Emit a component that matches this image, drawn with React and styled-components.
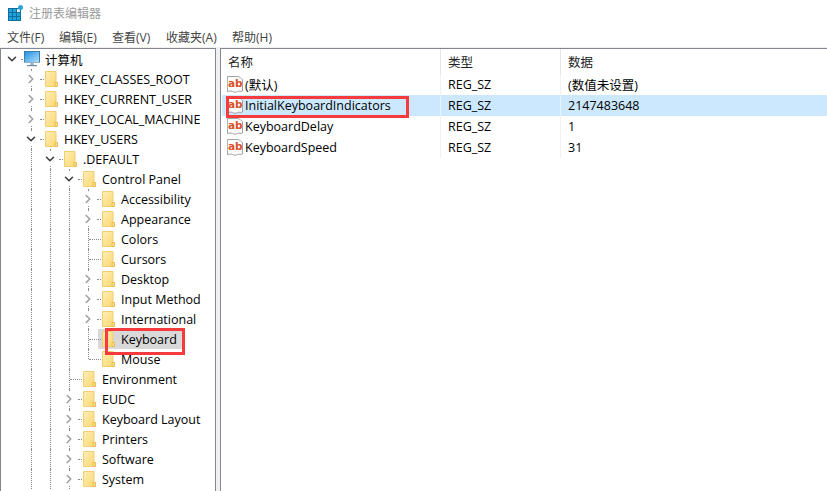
import React from "react";
import styled, { createGlobalStyle } from "styled-components";
import { ChevronDown, ChevronRight } from "lucide-react";

const Global = createGlobalStyle`
  html, body {
    margin: 0;
    height: 100%;
    overflow: hidden;
    background: #fff;
  }
`;

const Window = styled.div`
  position: relative;
  width: 827px;
  height: 491px;
  display: flex;
  flex-direction: column;
  overflow: hidden;
  background: #fff;
  color: #000;
  font-family: "Open Sans", "Noto Sans CJK SC", sans-serif;
  font-size: 12.5px;
`;

const TitleBar = styled.div`
  height: 26px;
  display: flex;
  align-items: center;
  gap: 6px;
  padding-left: 8px;
  color: #9a9a9a;
  font-size: 12px;
`;

const MenuBar = styled.div`
  height: 21px;
  display: flex;
  align-items: center;
  color: #444;
  font-size: 12px;
`;

const MenuItem = styled.span`
  width: ${props => props.width}px;
  flex: none;
  &:first-child {
    margin-left: 7px;
  }
`;

const Panes = styled.div`
  flex: 1;
  min-height: 0;
  display: flex;
  background: #f0f0f0;
  padding-top: 1px;
`;

const TreePane = styled.div`
  width: 214px;
  flex: none;
  background: #fff;
  border-top: 1px solid #828790;
  border-left: 1px solid #828790;
  border-right: 1px solid #828790;
  overflow: hidden;
`;

const ListPane = styled.div`
  flex: 1;
  margin-left: 4px;
  background: #fff;
  border-top: 1px solid #828790;
  border-left: 1px solid #828790;
  overflow: hidden;
`;

const TreeRow = styled.div`
  height: 20px;
  display: flex;
  align-items: center;
  padding-left: 2px;
  white-space: nowrap;
`;

const Guide = styled.span`
  position: relative;
  align-self: stretch;
  width: 19px;
  flex: none;
  ${props => props.$line && `
    &::before {
      content: "";
      position: absolute;
      left: 9px;
      top: 0;
      bottom: ${props.$end ? "10px" : "0"};
      border-left: 1px dotted #8a8a8a;
    }
  `}
  ${props => props.$branch && `
    &::after {
      content: "";
      position: absolute;
      left: ${props.$short ? "18px" : "10px"};
      width: ${props.$short ? "4px" : "12px"};
      top: 10px;
      border-top: 1px dotted #8a8a8a;
    }
  `}
  svg {
    position: absolute;
    left: 2px;
    top: 3px;
    background: #fff;
    z-index: 1;
  }
`;

const Selection = styled.span`
  display: flex;
  align-items: center;
  align-self: stretch;
  margin-left: ${props => props.$root ? "2px" : "4px"};
  padding-right: 5px;
  background: ${props => props.$selected ? "#d9d9d9" : "transparent"};
  box-shadow: ${props => props.$selected ? "-4px 0 0 #d9d9d9" : "none"};
`;

const NodeLabel = styled.span`
  margin-left: ${props => props.$root ? "5px" : "6px"};
`;

const ListHeader = styled.div`
  height: 25px;
  display: grid;
  grid-template-columns: 220px 120px 1fr;
  color: #222;
`;

const HeaderCell = styled.div`
  display: flex;
  align-items: center;
  padding-left: 7px;
  border-right: 1px solid #e5e5e5;
  &:last-child {
    border-right: none;
  }
`;

const ListBody = styled.div`
  position: relative;
  &::before,
  &::after {
    content: "";
    position: absolute;
    top: 0;
    bottom: 0;
    width: 1px;
    background: #eef1f5;
  }
  &::before {
    left: 219px;
  }
  &::after {
    left: 339px;
  }
`;

const ListRow = styled.div`
  height: 21px;
  display: grid;
  grid-template-columns: 219px 120px 1fr;
  align-items: center;
  margin-left: 1px;
  background: ${props => props.$selected ? "#cce8ff" : "transparent"};
`;

const NameCell = styled.div`
  display: flex;
  align-items: center;
  gap: 2px;
  padding-left: 5px;
`;

const ListCell = styled.div`
  padding-left: 7px;
`;

const Callout = styled.div`
  position: absolute;
  box-sizing: border-box;
  left: ${props => props.x}px;
  top: ${props => props.y}px;
  width: ${props => props.w}px;
  height: ${props => props.h}px;
  border: 3px solid #f63b3f;
  z-index: 3;
`;

function AppIcon() {
  return (
    <svg width="15" height="16" viewBox="0 0 15 16">
      <rect x="0" y="3" width="13" height="13" fill="#0f6d9e" />
      {[0, 1, 2].map(r =>
        [0, 1, 2].map(c => (
          <rect key={`${r}${c}`} x={1 + c * 4} y={4 + r * 4} width="3" height="3" fill={r === 0 && c === 2 ? "#e8f4fa" : "#1fa3d8"} />
        ))
      )}
      <circle cx="12.5" cy="2.5" r="2.5" fill="#2ba6dc" />
    </svg>
  );
}

function ComputerIcon() {
  return (
    <svg width="16" height="16" viewBox="0 0 16 16" style={{ flex: "none" }}>
      <defs>
        <linearGradient id="screen" x1="0" y1="0" x2="1" y2="1">
          <stop offset="0" stopColor="#1f8fe6" />
          <stop offset="1" stopColor="#b4e2f8" />
        </linearGradient>
      </defs>
      <rect x="0.5" y="0.5" width="15" height="11" fill="url(#screen)" stroke="#3f7da6" />
      <rect x="0" y="11" width="16" height="1" fill="#8fb0c6" />
      <path d="M6.5 12h3l.5 2H6z" fill="#9db6c6" />
      <rect x="3" y="14" width="10" height="1.2" fill="#6f8ea3" />
    </svg>
  );
}

function FolderIcon() {
  return (
    <svg width="13" height="16" viewBox="0 0 13 16" style={{ flex: "none" }}>
      <defs>
        <linearGradient id="folder" x1="0" y1="0" x2="1" y2="1">
          <stop offset="0" stopColor="#fdeeb8" />
          <stop offset="1" stopColor="#fbd872" />
        </linearGradient>
      </defs>
      <path d="M0.5 0.5h10.5v15H0.5z" fill="url(#folder)" stroke="#f0cf70" />
      <path d="M10 11.5h2.5v4H10z" fill="#fbe08e" stroke="#e8bc4c" />
    </svg>
  );
}

function StringIcon() {
  return (
    <svg width="16" height="17" viewBox="0 0 16 17" style={{ flex: "none" }}>
      <path d="M0.5 0.5h11l4 3v11.5c-2 1-3-.4-5 .6s-3 .8-5-.1-3-.2-5 .1z" fill="#fafafa" stroke="#a3a3a3" />
      <rect x="0.8" y="2.5" width="13.4" height="9.5" fill="#fff" />
      <text x="1" y="11" fontFamily="'DejaVu Sans', sans-serif" fontWeight="700" fontSize="10.5" fill="#d9502a">ab</text>
    </svg>
  );
}

// depth, label, guides to the left, toggle state
const treeRows = [
  { label: "计算机", depth: 0, open: true, lines: [] },
  { label: "HKEY_CLASSES_ROOT", depth: 1, lines: [] },
  { label: "HKEY_CURRENT_USER", depth: 1, lines: [] },
  { label: "HKEY_LOCAL_MACHINE", depth: 1, lines: [] },
  { label: "HKEY_USERS", depth: 1, open: true, lines: [] },
  { label: ".DEFAULT", depth: 2, open: true, lines: [1] },
  { label: "Control Panel", depth: 3, open: true, lines: [1, 2] },
  { label: "Accessibility", depth: 4, lines: [1, 2, 3] },
  { label: "Appearance", depth: 4, lines: [1, 2, 3] },
  { label: "Colors", depth: 4, leaf: true, lines: [1, 2, 3] },
  { label: "Cursors", depth: 4, leaf: true, lines: [1, 2, 3] },
  { label: "Desktop", depth: 4, lines: [1, 2, 3] },
  { label: "Input Method", depth: 4, lines: [1, 2, 3] },
  { label: "International", depth: 4, lines: [1, 2, 3] },
  { label: "Keyboard", depth: 4, leaf: true, selected: true, lines: [1, 2, 3] },
  { label: "Mouse", depth: 4, leaf: true, last: true, lines: [1, 2, 3] },
  { label: "Environment", depth: 3, leaf: true, lines: [1, 2] },
  { label: "EUDC", depth: 3, lines: [1, 2] },
  { label: "Keyboard Layout", depth: 3, lines: [1, 2] },
  { label: "Printers", depth: 3, lines: [1, 2] },
  { label: "Software", depth: 3, lines: [1, 2] },
  { label: "System", depth: 3, lines: [1, 2] },
];

const values = [
  { name: "(默认)", type: "REG_SZ", data: "(数值未设置)" },
  { name: "InitialKeyboardIndicators", type: "REG_SZ", data: "2147483648", selected: true },
  { name: "KeyboardDelay", type: "REG_SZ", data: "1" },
  { name: "KeyboardSpeed", type: "REG_SZ", data: "31" },
];

const menus = [
  ["文件(F)", 52],
  ["编辑(E)", 53],
  ["查看(V)", 54],
  ["收藏夹(A)", 66],
  ["帮助(H)", 60],
];

function Toggle({ row }) {
  const Icon = row.open ? ChevronDown : ChevronRight;
  const color = row.open ? "#404040" : "#a0a0a0";
  if (row.leaf) {
    return <Guide $line $end={row.last} $branch />;
  }
  return (
    <Guide $line={row.depth > 0} $branch $short>
      <Icon size={14} color={color} strokeWidth={2.8} />
    </Guide>
  );
}

function TreeNode({ row }) {
  const guides = [];
  for (let i = 0; i < row.depth; i++) {
    guides.push(<Guide key={i} $line={row.lines.includes(i)} />);
  }
  return (
    <TreeRow>
      {guides}
      <Toggle row={row} />
      <Selection $root={row.depth === 0} $selected={row.selected}>
        {row.depth === 0 ? <ComputerIcon /> : <FolderIcon />}
        <NodeLabel $root={row.depth === 0}>{row.label}</NodeLabel>
      </Selection>
    </TreeRow>
  );
}

export default function App() {
  return (
    <Window>
      <Global />
      <TitleBar>
        <AppIcon />
        注册表编辑器
      </TitleBar>
      <MenuBar>
        {menus.map(([label, width]) => (
          <MenuItem key={label} width={width}>{label}</MenuItem>
        ))}
      </MenuBar>
      <Panes>
        <TreePane>
          {treeRows.map(row => <TreeNode key={row.label} row={row} />)}
        </TreePane>
        <ListPane>
          <ListHeader>
            <HeaderCell>名称</HeaderCell>
            <HeaderCell>类型</HeaderCell>
            <HeaderCell>数据</HeaderCell>
          </ListHeader>
          <ListBody>
            {values.map(v => (
              <ListRow key={v.name} $selected={v.selected}>
                <NameCell><StringIcon />{v.name}</NameCell>
                <ListCell>{v.type}</ListCell>
                <ListCell>{v.data}</ListCell>
              </ListRow>
            ))}
          </ListBody>
        </ListPane>
      </Panes>
      <Callout x={105} y={328} w={80} h={27} />
      <Callout x={226} y={96} w={183} h={22} />
    </Window>
  );
}
